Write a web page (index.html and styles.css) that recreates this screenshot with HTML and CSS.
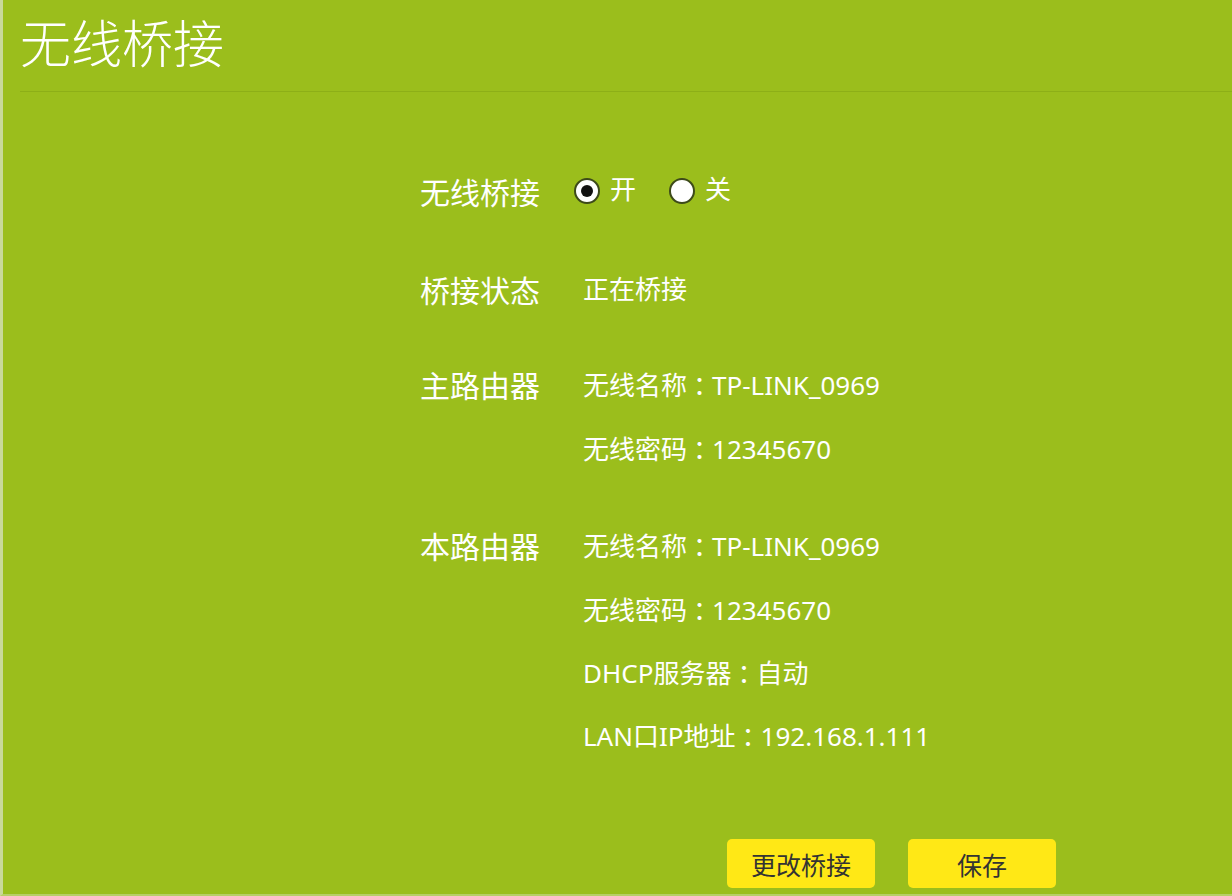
FILE: index.html
```html
<!DOCTYPE html>
<html lang="zh-CN">
<head>
<meta charset="utf-8">
<title>无线桥接</title>
<link rel="stylesheet" href="styles.css">
</head>
<body>
<div class="page">
  <header class="head">
    <h1 class="title">无线桥接</h1>
  </header>
  <main class="form">
    <div class="group">
      <div class="label">无线桥接</div>
      <div class="values">
        <div class="line radios">
          <span class="radio checked"></span><span class="rtext">开</span>
          <span class="radio"></span><span class="rtext">关</span>
        </div>
      </div>
    </div>
    <div class="group">
      <div class="label">桥接状态</div>
      <div class="values">
        <div class="line cjk">正在桥接</div>
      </div>
    </div>
    <div class="group">
      <div class="label">主路由器</div>
      <div class="values">
        <div class="line">无线名称<span class="colon">：</span>TP-LINK_0969</div>
        <div class="line">无线密码<span class="colon">：</span>12345670</div>
      </div>
    </div>
    <div class="group">
      <div class="label">本路由器</div>
      <div class="values">
        <div class="line">无线名称<span class="colon">：</span>TP-LINK_0969</div>
        <div class="line">无线密码<span class="colon">：</span>12345670</div>
        <div class="line">DHCP服务器<span class="colon">：</span>自动</div>
        <div class="line">LAN口IP地址<span class="colon">：</span>192.168.1.111</div>
      </div>
    </div>
    <div class="actions">
      <button class="btn">更改桥接</button>
      <button class="btn">保存</button>
    </div>
  </main>
</div>
</body>
</html>
```

FILE: styles.css
```css
html, body {
  margin: 0;
  padding: 0;
  background: #9bbe1c;
}
body {
  font-family: "Noto Sans", "Noto Sans CJK SC", sans-serif;
  color: #ffffff;
}
.page {
  width: 1232px;
  height: 896px;
  box-sizing: border-box;
  border-left: 3px solid #c9d99a;
  border-bottom: 2px solid #b7cf66;
  background: #9bbe1c;
  overflow: hidden;
}
.head {
  margin-left: 17px;
  height: 92px;
  border-bottom: 1px solid #8daf17;
  box-sizing: border-box;
}
.title {
  margin: 0;
  padding-top: 9px;
  font-family: "Noto Sans CJK SC", sans-serif;
  font-weight: 300;
  font-size: 51px;
  line-height: 64px;
}
.form {
  padding-top: 67px;
  padding-left: 417px;
}
.group {
  display: grid;
  grid-template-columns: 163px auto;
  margin-bottom: 34px;
}
.group:nth-child(2) {
  margin-bottom: 31px;
}
.label {
  font-family: "Noto Sans CJK SC", sans-serif;
  font-size: 30px;
  line-height: 64px;
  height: 64px;
}
.line {
  font-size: 26px;
  line-height: 64px;
  height: 64px;
  white-space: nowrap;
}
.values .line:nth-child(n+2) {
  height: 63px;
}
.colon {
  font-family: "Noto Sans CJK SC", sans-serif;
  padding-left: 6px;
  letter-spacing: -7px;
}
.radios {
  display: flex;
  align-items: center;
  font-family: "Noto Sans CJK SC", sans-serif;
  font-size: 26px;
}
.radio {
  width: 26px;
  height: 26px;
  border-radius: 50%;
  background: #ffffff;
  border: 2px solid #3d4a1a;
  box-sizing: border-box;
  margin-left: -9px;
  display: inline-flex;
  align-items: center;
  justify-content: center;
}
.radio.checked::after {
  content: "";
  width: 12px;
  height: 12px;
  border-radius: 50%;
  background: #111111;
}
.rtext {
  margin-left: 10px;
  margin-right: 42px;
  margin-top: -6px;
}
.actions {
  display: flex;
  gap: 33px;
  margin-top: 73px;
  padding-left: 307px;
}
.btn {
  width: 148px;
  height: 49px;
  border: none;
  border-radius: 5px;
  background: #ffe816;
  color: #333333;
  font-family: "Noto Sans CJK SC", sans-serif;
  font-size: 25px;
  padding: 0;
}
```
